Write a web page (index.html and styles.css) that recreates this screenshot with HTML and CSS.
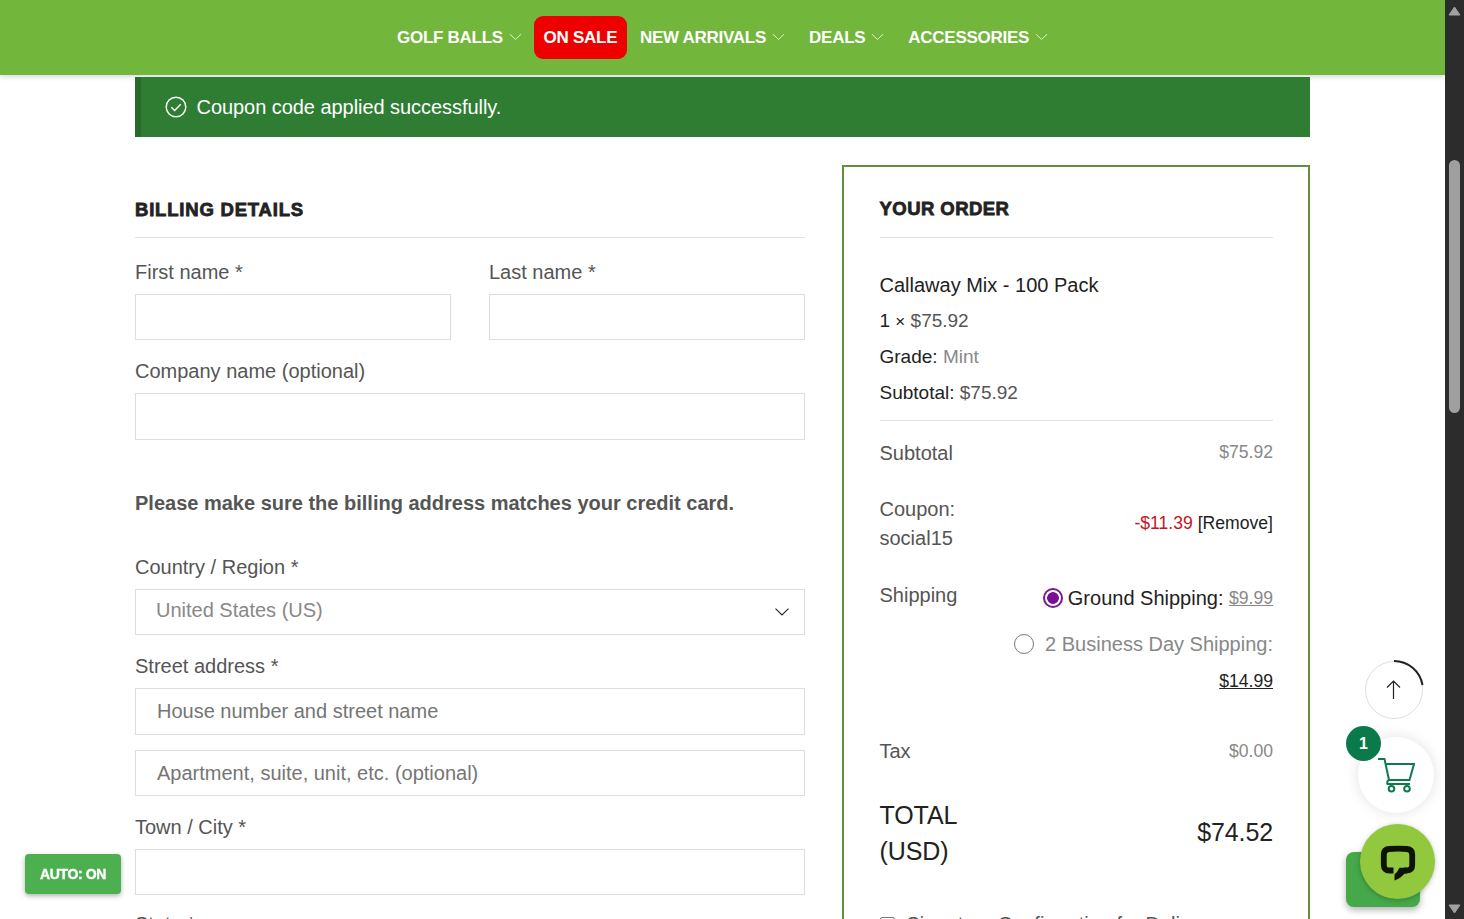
FILE: index.html
```html
<!DOCTYPE html>
<html lang="en">
<head>
    <meta charset="UTF-8">
    <meta name="viewport" content="width=device-width, initial-scale=1.0">
    <title>Checkout</title>
    <link rel="stylesheet" href="styles.css">
</head>
<body>
<div class="page">
    <header class="header">
        <nav class="nav">
            <a class="nav-link">GOLF BALLS <svg class="caret" viewBox="0 0 14 8"><path d="M1 1l6 5.6L13 1"/></svg></a>
            <a class="nav-link sale">ON SALE</a>
            <a class="nav-link">NEW ARRIVALS <svg class="caret" viewBox="0 0 14 8"><path d="M1 1l6 5.6L13 1"/></svg></a>
            <a class="nav-link">DEALS <svg class="caret" viewBox="0 0 14 8"><path d="M1 1l6 5.6L13 1"/></svg></a>
            <a class="nav-link">ACCESSORIES <svg class="caret" viewBox="0 0 14 8"><path d="M1 1l6 5.6L13 1"/></svg></a>
        </nav>
    </header>

    <main class="container">
        <div class="notice">
            <svg class="notice-icon" viewBox="0 0 22 22"><circle cx="11" cy="11" r="9.8"/><path d="M6.3 11.2l3.4 3.2 6-6.2"/></svg>
            <span>Coupon code applied successfully.</span>
        </div>

        <div class="checkout">
            <form class="billing">
                <h3 class="heading">BILLING DETAILS</h3>
                <div class="two-col">
                    <div class="field">
                        <label for="first">First name *</label>
                        <input type="text" id="first">
                    </div>
                    <div class="field">
                        <label for="last">Last name *</label>
                        <input type="text" id="last">
                    </div>
                </div>
                <div class="field tall">
                    <label for="company">Company name (optional)</label>
                    <input type="text" id="company">
                </div>
                <p class="address-note">Please make sure the billing address matches your credit card.</p>
                <div class="field">
                    <label>Country / Region *</label>
                    <div class="select">
                        <span>United States (US)</span>
                        <svg class="select-caret" viewBox="0 0 14 8"><path d="M.5 .7L7 7l6.500-6.300"/></svg>
                    </div>
                </div>
                <div class="field tall">
                    <label for="street">Street address *</label>
                    <input type="text" id="street" placeholder="House number and street name">
                </div>
                <div class="field">
                    <input type="text" placeholder="Apartment, suite, unit, etc. (optional)">
                </div>
                <div class="field">
                    <label for="city">Town / City *</label>
                    <input type="text" id="city">
                </div>
                <div class="field state">
                    <label for="state">State *</label>
                    <input type="text" id="state">
                </div>
            </form>

            <section class="order">
                <h3 class="heading">YOUR ORDER</h3>
                <div class="product">
                    <div class="product-name">Callaway Mix - 100 Pack</div>
                    <div>1 <span class="times">×</span> <span class="price">$75.92</span></div>
                    <div>Grade: <span class="muted">Mint</span></div>
                    <div>Subtotal: <span class="price">$75.92</span></div>
                </div>
                <div class="row">
                    <span class="row-label">Subtotal</span>
                    <span class="amount first">$75.92</span>
                </div>
                <div class="row coupon">
                    <span class="row-label">Coupon: social15</span>
                    <span class="amount"><span class="minus">-$11.39</span> <a class="remove">[Remove]</a></span>
                </div>
                <div class="row shipping">
                    <span class="row-label">Shipping</span>
                    <div class="methods">
                        <div class="method">
                            <span class="radio checked"></span>
                            <span class="method-name active">Ground Shipping:</span>
                            <span class="cost">$9.99</span>
                        </div>
                        <div class="method second">
                            <span class="radio"></span>
                            <span class="method-name">2 Business Day Shipping:</span>
                        </div>
                        <div class="method"><span class="cost dark">$14.99</span></div>
                    </div>
                </div>
                <div class="row">
                    <span class="row-label">Tax</span>
                    <span class="amount">$0.00</span>
                </div>
                <div class="row total">
                    <span class="total-label">TOTAL (USD)</span>
                    <span>$74.52</span>
                </div>
                <div class="signature">
                    <span class="checkbox"></span>
                    <span>Signature Confirmation for Delivery</span>
                </div>
            </section>
        </div>
    </main>
</div>

<div class="scrollbar">
    <svg class="arrow" viewBox="0 0 13 10"><path d="M6.500 1L12 9H1z"/></svg>
    <div class="thumb"></div>
    <svg class="arrow down" viewBox="0 0 13 10"><path d="M1 1h11L6.500 9z"/></svg>
</div>

<button class="auto">AUTO: ON</button>

<!-- floating buttons -->
<div class="to-top">
    <svg viewBox="0 0 64 64">
        <circle class="ring" cx="32" cy="32" r="28.500"/>
        <path class="progress" d="M32 3A29 29 0 0 1 60.500 27"/>
        <path class="up" d="M31.500 41V23M25 29.500L31.500 23l6.500 6.500"/>
    </svg>
</div>
<div class="cart">
    <svg viewBox="0 0 38 36">
        <path d="M1 2h6.500l4.500 21M8.500 7H37l-4.500 16H12q-2.500 1-1.500 4H33"/>
        <circle cx="14.500" cy="31.700" r="2.800"/>
        <circle cx="30" cy="31.700" r="2.800"/>
    </svg>
    <span class="badge">1</span>
</div>
<div class="green-box"></div>
<div class="chat">
    <svg viewBox="0 0 36 38">
        <path d="M13.500 25.500H9.500Q3.800 25.500 3.800 20V9.500Q3.800 4.500 9 4Q18 3.200 27 4Q32.200 4.500 32.200 9.500V20Q32.200 25.500 26.500 25.500H24"/>
        <path class="tail" d="M14.500 35.500V29.500Q17.500 27 19.500 22.800H27V28.200L24.500 28.500Q20.500 33.500 14.500 35.500z"/>
    </svg>
</div>
</body>
</html>
```
FILE: styles.css
```css
* {
    box-sizing: border-box;
}
body {
    margin: 0;
    height: 919px;
    display: flex;
    overflow: hidden;
    background: #fff;
    color: #222;
    font-family: "Liberation Sans", Arial, sans-serif;
    font-size: 20px;
}
.page {
    width: 1445px;
    height: 919px;
    overflow: hidden;
}
.header {
    height: 75px;
    background: #72b63c;
    box-shadow: 0 1px 6px rgba(0, 0, 0, 0.2);
}
.nav {
    display: flex;
    align-items: center;
    height: 75px;
    padding-left: 397px;
}
.nav-link {
    display: flex;
    align-items: center;
    color: #fff;
    font-size: 17px;
    font-weight: bold;
    letter-spacing: -0.27px;
    margin-right: 24px;
    white-space: nowrap;
}
.nav-link:first-child {
    margin-right: 12px;
}
.caret {
    width: 13px;
    height: 8px;
    margin-left: 6px;
    margin-top: -2px;
    fill: none;
    stroke: #e6f8cf;
    stroke-width: 1;
}
.sale {
    height: 43px;
    width: 93px;
    justify-content: center;
    margin-right: 13px;
    border-radius: 9px;
    background: #ee0000;
}
.container {
    width: 1175px;
    margin: 2px 0 0 135px;
}
.notice {
    position: relative;
    display: flex;
    align-items: center;
    height: 60px;
    padding-left: 24px;
    border-left: 6px solid #266b2b;
    background: #2e7d32;
    color: #fff;
    letter-spacing: -0.05px;
}
.notice-icon {
    width: 22px;
    height: 22px;
    margin-right: 9.5px;
    fill: none;
    stroke: #fff;
    stroke-width: 1.4;
}
.checkout {
    display: flex;
    justify-content: space-between;
    align-items: flex-start;
    margin-top: 28px;
}
.heading {
    margin: 0;
    border-bottom: 1px solid #e1e1e1;
    font-size: 18.5px;
    font-weight: bold;
    letter-spacing: 0.8px;
    -webkit-text-stroke: 0.8px #222;
}

/* billing form */
.billing {
    width: 670px;
    padding-top: 29px;
}
.billing .heading {
    height: 44px;
    line-height: 31px;
    margin-bottom: 19px;
}
.two-col {
    display: grid;
    grid-template-columns: 316px 316px;
    justify-content: space-between;
}
.field {
    margin-bottom: 16px;
}
.field label {
    display: block;
    line-height: 30px;
    margin-bottom: 7px;
    color: #555;
}
.field input,
.select {
    display: flex;
    width: 100%;
    height: 46px;
    padding: 0 21px;
    border: 1px solid #ddd;
    border-radius: 0;
    background: #fff;
    font-family: inherit;
    font-size: 20px;
}
.tall {
    margin-bottom: 15px;
}
.tall input {
    height: 47px;
}
.field input::placeholder {
    color: #757575;
}
.select {
    align-items: center;
    justify-content: space-between;
    padding: 0 15px 0 20px;
    color: #888;
}
.select span {
    margin-top: -3px;
}
.select-caret {
    width: 14px;
    height: 8px;
    fill: none;
    stroke: #222;
    stroke-width: 1.1;
}
.address-note {
    margin: 48px 0 34px;
    line-height: 30px;
    color: #555;
    font-weight: bold;
}
.field.state {
    margin-top: -2px;
}

/* order box */
.order {
    width: 468px;
    height: 900px;
    padding: 27px 35px 0 35.5px;
    border: 2px solid #668e3d;
}
.order .heading {
    height: 44px;
    line-height: 29px;
    margin-bottom: 28.5px;
    letter-spacing: 0.45px;
}
.product {
    height: 154.5px;
    border-bottom: 1px solid #e1e1e1;
    font-size: 19px;
    line-height: 35.5px;
}
.product-name {
    font-size: 20px;
    line-height: 36px;
}
.times {
    font-size: 17px;
}
.price {
    color: #555;
}
.muted {
    color: #888;
}
.row {
    display: flex;
    align-items: center;
    justify-content: space-between;
    height: 64px;
}
.row-label {
    width: 110px;
    color: #555;
    line-height: 29px;
}
.amount,
.cost {
    color: #888;
    font-size: 17.6px;
}
.amount.first {
    margin-bottom: 2px;
}
.coupon {
    height: 77px;
}
.coupon .row-label {
    width: 90px;
}
.minus {
    color: #c4161c;
}
.remove {
    color: #222;
}
.shipping {
    height: 157px;
    align-items: flex-start;
}
.shipping .row-label {
    padding-top: 19px;
}
.methods {
    padding-top: 18px;
}
.method {
    display: flex;
    align-items: center;
    justify-content: flex-end;
    height: 37px;
}
.method.second {
    height: 55px;
    margin-bottom: -9px;
}
.method-name {
    color: #888;
}
.active {
    color: #222;
    margin-right: 5.5px;
}
.radio {
    width: 20px;
    height: 20px;
    margin: -1px 11px 0 0;
    border: 1.5px solid #767676;
    border-radius: 50%;
    background: #fff;
}
.radio.checked {
    margin-right: 5px;
    border: 2px solid #7b1790;
    background: radial-gradient(circle, #7b0f93 5.5px, #fff 6.2px);
}
.cost {
    text-decoration: underline;
}
.dark {
    color: #222;
}
.total {
    height: 99px;
    font-size: 25px;
    letter-spacing: -0.1px;
}
.total-label {
    width: 90px;
    line-height: 36px;
}
.signature {
    display: flex;
    align-items: center;
    height: 30px;
    margin-top: 27px;
    color: #555;
}
.checkbox {
    width: 15px;
    height: 15px;
    margin-right: 12px;
    border: 1px solid #767676;
    border-radius: 2px;
}

/* scrollbar */
.scrollbar {
    width: 19px;
    height: 919px;
    display: flex;
    flex-direction: column;
    align-items: center;
    padding: 6px 0 5px;
    background: #2c2c2c;
}
.arrow {
    width: 13px;
    height: 10px;
    fill: #a0a0a0;
    stroke: #a0a0a0;
    stroke-linejoin: round;
}
.thumb {
    width: 11px;
    height: 253px;
    margin-top: 144px;
    border-radius: 6px;
    background: #9f9f9f;
}
.down {
    margin-top: auto;
}

.auto {
    position: fixed;
    left: 25px;
    top: 854px;
    width: 96px;
    height: 40px;
    padding: 0;
    border: none;
    border-radius: 4px;
    background: #4caf50;
    box-shadow: 0 2px 5px rgba(0, 0, 0, 0.3);
    color: #fff;
    font: bold 14px "Liberation Sans", Arial, sans-serif;
    letter-spacing: -0.4px;
    -webkit-text-stroke: 0.4px #fff;
}
.to-top {
    position: fixed;
    left: 1362px;
    top: 658px;
    width: 64px;
    height: 64px;
}
.ring {
    fill: #fff;
    stroke: #ddd;
}
.progress {
    fill: none;
    stroke: #222;
    stroke-width: 2;
}
.up {
    fill: none;
    stroke: #222;
    stroke-width: 1.2;
}
.cart {
    position: fixed;
    left: 1358px;
    top: 737px;
    width: 76px;
    height: 76px;
    border-radius: 50%;
    background: #fff;
    box-shadow: 0 0 14px rgba(0, 0, 0, 0.12);
}
.cart svg {
    width: 38px;
    height: 36px;
    margin: 20px 0 0 19px;
    fill: none;
    stroke: #0f7a50;
    stroke-width: 2;
}
.badge {
    position: absolute;
    left: -12px;
    top: -11px;
    width: 35px;
    height: 35px;
    border-radius: 50%;
    background: #0b7a4b;
    color: #fff;
    font-size: 16px;
    font-weight: bold;
    line-height: 35px;
    text-align: center;
}
.green-box {
    position: fixed;
    left: 1346px;
    top: 852px;
    width: 74px;
    height: 55px;
    border-radius: 8px;
    background: #45a849;
    box-shadow: 0 3px 7px rgba(0, 0, 0, 0.3);
}
.chat {
    position: fixed;
    left: 1360px;
    top: 824px;
    width: 75px;
    height: 75px;
    border-radius: 50%;
    background: #92c83e;
    box-shadow: 0 1px 5px rgba(0, 0, 0, 0.25);
}
.chat svg {
    width: 36px;
    height: 38px;
    margin: 21px 0 0 20px;
    fill: none;
    stroke: #0d1404;
    stroke-width: 5.8;
}
.chat .tail {
    fill: #0d1404;
    stroke: none;
}
```
